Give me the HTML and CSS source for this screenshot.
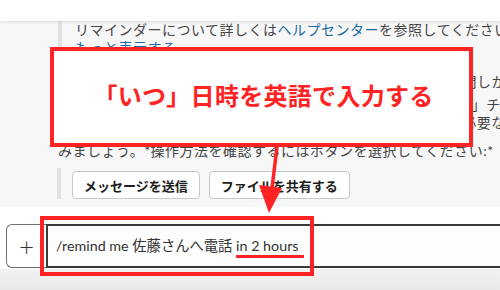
FILE: index.html
```html
<!DOCTYPE html>
<html>
  <head>
    <link rel="stylesheet" href="styles.css">
  </head>
  <body>
    <div class="topbar"></div>

    <div class="feed">
      <div class="attachment quote">
        <p class="line">リマインダーについて詳しくは<a class="link">ヘルプセンター</a>を参照してください。</p>
        <p class="line"><a class="link">もっと表示する</a></p>
      </div>

      <p class="line gap1">次のように入力するとリマインダーを設定できます。ただし時間しか指定できません。</p>
      <p class="line gap2">例えば「毎週月曜日の午前9時にミーティングの準備作業をする」チャンネル</p>
      <p class="line">にも送信できます。チャンネルへ送る場合は、管理者の許可が必要な場合もあります。</p>
      <p class="line gap3">みましょう。*操作方法を確認するにはボタンを選択してください:*</p>

      <div class="attachment actions">
        <button class="action-button">メッセージを送信</button>
        <button class="action-button">ファイルを共有する</button>
      </div>
    </div>

    <div class="composer">
      <div class="composer-box">
        <div class="plus">+</div>
        <div class="input">/remind me 佐藤さんへ電話 <span class="mark">in 2 hours</span></div>
      </div>
    </div>

    <!-- annotation overlays -->
    <div class="callout">「いつ」日時を英語で入力する</div>
    <div class="input-frame"></div>
    <svg class="arrow" width="500" height="290" viewBox="0 0 500 290">
      <line x1="277" y1="147" x2="272" y2="188" stroke="#ff2323" stroke-width="3.5" />
      <polygon points="259,185 282,188 269,213" fill="#ff2323" />
    </svg>
  </body>
</html>
```

FILE: styles.css
```css
body {
  margin: 0;
  width: 500px;
  height: 290px;
  overflow: hidden;
  position: relative;
  font-family: Lato, "Noto Sans CJK JP", sans-serif;
  background-color: #ffffff;
}

p {
  margin: 0;
}

.topbar {
  height: 21px;
  background-color: #ffffff;
  box-shadow: 0 1px 3px rgba(0, 0, 0, 0.12);
  position: relative;
}

.feed {
  height: 186px;
  background-color: #f7f7f7;
  padding-left: 58px;
  box-sizing: border-box;
  overflow: hidden;
}

.line {
  font-size: 14px;
  line-height: 18px;
  letter-spacing: 0.5px;
  color: #454545;
  white-space: nowrap;
}

.link {
  color: #1a6aa8;
}

.attachment {
  border-left: 4px solid #e2e2e2;
  padding-left: 13px;
}

.quote {
  padding-bottom: 8px;
}

.gap1 {
  margin-top: 8px;
}

.gap2 {
  margin-top: 5px;
}

.gap3 {
  margin-top: 10px;
}

.actions {
  margin-top: 8px;
  margin-left: -1px;
  padding-left: 11px;
  padding-top: 3px;
  display: flex;
  gap: 9px;
}

.action-button {
  font-family: Lato, "Noto Sans CJK JP", sans-serif;
  font-size: 13px;
  font-weight: bold;
  color: #1d1d1d;
  background-color: #ffffff;
  border: 1px solid #c8c8c8;
  border-radius: 4px;
  height: 28px;
  padding: 0 11px;
}

.composer {
  height: 83px;
  padding: 17px 0 0 6px;
  box-sizing: border-box;
  background: linear-gradient(#ffffff 61px, #f2f2f2 62px, #e8e8e8 83px);
}

.composer-box {
  display: flex;
  height: 44px;
}

.plus {
  width: 40px;
  border: 1.5px solid #707070;
  border-right: none;
  border-radius: 6px 0 0 6px;
  box-sizing: border-box;
  display: flex;
  align-items: center;
  justify-content: center;
  font-size: 26px;
  font-weight: 300;
  color: #333333;
}

.input {
  flex: 1;
  border: 2px solid #3a3a3a;
  border-right: none;
  background-color: #fdfdfd;
  padding-left: 8px;
  font-size: 14.3px;
  line-height: 40px;
  color: #333333;
  white-space: nowrap;
}

.mark {
  display: inline-block;
  line-height: 18px;
  padding-right: 5px;
  border-bottom: 3px solid #ff2323;
}

.callout {
  position: absolute;
  left: 50px;
  top: 47px;
  width: 423px;
  height: 100px;
  box-sizing: border-box;
  border: 4px solid #ff2323;
  background-color: #ffffff;
  display: flex;
  align-items: center;
  justify-content: center;
  font-family: "Noto Sans CJK JP", sans-serif;
  font-size: 24px;
  font-weight: bold;
  letter-spacing: 0.3px;
  color: #ff2323;
  padding-left: 4px;
  padding-bottom: 6px;
}

.input-frame {
  position: absolute;
  left: 40px;
  top: 216px;
  width: 274px;
  height: 60px;
  box-sizing: border-box;
  border: 4px solid #ff2323;
}

.arrow {
  position: absolute;
  left: 0;
  top: 0;
}
```
